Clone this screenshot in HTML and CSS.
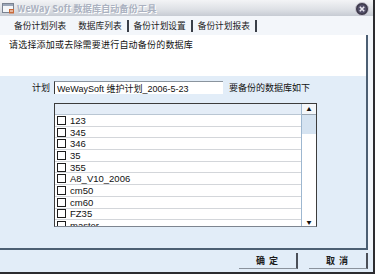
FILE: index.html
```html
<!DOCTYPE html>
<html lang="zh-CN">
  <head>
    <meta charset="UTF-8" />
    <meta name="viewport" content="width=device-width, initial-scale=1.0" />
    <title>WeWay Soft 数据库自动备份工具</title>
    <link rel="stylesheet" href="styles.css">
  </head>
  <body>
    <div class="window">
      <div class="titlebar">
        <svg class="app-icon" width="13" height="11" viewBox="0 0 13 11">
          <rect x="0.5" y="0.5" width="11" height="9" fill="#f4f6f8" stroke="#7a8290" />
          <rect x="1" y="1" width="10" height="2" fill="#9aa6b8" />
          <path d="M7 6 L12 6 L12 10.5 L7 10.5 Z" fill="#c86a3a" />
          <path d="M8 8 L11 8" stroke="#fff" stroke-width="1" />
        </svg>
        <span class="title">WeWay Soft 数据库自动备份工具</span>
        <svg class="close" width="14" height="14" viewBox="0 0 14 14">
          <circle cx="7" cy="7" r="6.5" fill="#3b3848" stroke="#c9c6d2" stroke-width="1" />
          <circle cx="7" cy="7" r="4.5" fill="#54506a" />
          <path d="M4.8 4.8 L9.2 9.2 M9.2 4.8 L4.8 9.2" stroke="#e8e6ee" stroke-width="1.6" />
        </svg>
      </div>

      <div class="tabs">
        <span class="tab first">备份计划列表</span>
        <span class="tab sep">数据库列表</span>
        <span class="tab sep">备份计划设置</span>
        <span class="tab sep">备份计划报表</span>
      </div>

      <div class="content">
        <div class="panel">
          <div class="desc">请选择添加或去除需要进行自动备份的数据库</div>
          <div class="form">
            <div class="plan-row">
              <label class="plan-label" for="plan">计划</label>
              <input class="plan-input" id="plan" type="text" value="WeWaySoft 维护计划_2006-5-23" />
              <span class="plan-note">要备份的数据库如下</span>
            </div>
            <div class="db-list">
              <div class="db-rows">
                <div class="db-head"></div>
                <div class="db-row"><span class="check"></span>123</div>
                <div class="db-row"><span class="check"></span>345</div>
                <div class="db-row"><span class="check"></span>346</div>
                <div class="db-row"><span class="check"></span>35</div>
                <div class="db-row"><span class="check"></span>355</div>
                <div class="db-row"><span class="check"></span>A8_V10_2006</div>
                <div class="db-row"><span class="check"></span>cm50</div>
                <div class="db-row"><span class="check"></span>cm60</div>
                <div class="db-row"><span class="check"></span>FZ35</div>
                <div class="db-row"><span class="check"></span>master</div>
              </div>
              <div class="scrollbar">
                <div class="arrow up">&#9650;</div>
                <div class="thumb"></div>
                <div class="track"></div>
                <div class="arrow down">&#9660;</div>
              </div>
            </div>
          </div>
        </div>
        <div class="buttons">
          <button class="btn">确 定</button>
          <button class="btn">取 消</button>
        </div>
      </div>
    </div>
  </body>
</html>
```

FILE: styles.css
```css
body {
  margin: 0;
  background-color: #e2edf8;
  font-family: "Noto Sans CJK SC", "Liberation Sans", sans-serif;
  font-size: 9px;
  color: #111;
}
.window {
  width: 375px;
  height: 274px;
  box-sizing: border-box;
  display: flex;
  flex-direction: column;
  background-color: #e2edf8;
  border-right: 2px solid #2c2c30;
  border-bottom: 2px solid #2c2c30;
  overflow: hidden;
}
.titlebar {
  height: 16px;
  flex: none;
  display: flex;
  align-items: center;
  padding: 0 4px 0 2px;
  background: linear-gradient(#f3f4f6, #dde0e5 60%, #c6cbd3);
}
.app-icon {
  margin-right: 2px;
}
.title {
  flex: 1;
  font-weight: bold;
  font-size: 9px;
  color: #aab1c0;
  text-shadow: 1px 1px 0 #fff;
  letter-spacing: 0.2px;
}
.close {
  margin-top: 1px;
}
.tabs {
  height: 19px;
  flex: none;
  display: flex;
  align-items: center;
  background-color: #f3f6fa;
  font-size: 8.7px;
}
.tab {
  padding: 0 5px;
  line-height: 12px;
  color: #1a1a1a;
}
.tab.first {
  padding-left: 14px;
  padding-right: 7px;
}
.tab.sep {
  border-right: 2px solid #3a3f48;
}
.content {
  flex: 1;
  display: flex;
  flex-direction: column;
  background-color: #f2f6fb;
}
.panel {
  margin-right: 5px;
  background-color: #e2edf8;
  border-right: 2px solid #4c5f73;
  border-bottom: 2px solid #4c5f73;
}
.desc {
  height: 41px;
  box-sizing: border-box;
  padding: 3px 9px;
  background-color: #fff;
  letter-spacing: 0.2px;
}
.form {
  padding: 5px 0 21px 0;
}
.plan-row {
  display: flex;
  align-items: center;
  height: 13px;
}
.plan-label {
  width: 50px;
  box-sizing: border-box;
  padding-left: 32px;
  margin-right: 4px;
}
.plan-input {
  width: 169px;
  height: 13px;
  box-sizing: border-box;
  margin: 0 6px 0 0;
  padding: 0 2px;
  border: none;
  border-left: 1px solid #3a3a3a;
  border-top: 1px solid #8a949e;
  background-color: #fff;
  font-family: "Liberation Sans", "Noto Sans CJK SC", sans-serif;
  font-size: 9px;
  color: #111;
}
.db-list {
  display: flex;
  margin: 9px 0 0 54px;
  width: 263px;
  height: 124px;
  box-sizing: border-box;
  border: 1px solid #3c3c3c;
  border-bottom-color: #7d8590;
  background-color: #fff;
  overflow: hidden;
}
.db-rows {
  flex: 1;
}
.db-head {
  height: 10px;
  background-color: #e4edf7;
  border-bottom: 1px solid #b9c6d3;
}
.db-row {
  height: 11.7px;
  box-sizing: border-box;
  display: flex;
  align-items: center;
  padding-left: 2px;
  border-bottom: 1px solid #d3d6da;
  font-family: "Liberation Sans", sans-serif;
  font-size: 9.5px;
}
.check {
  width: 9px;
  height: 9px;
  box-sizing: border-box;
  border: 1.5px solid #1c1c1c;
  margin-right: 4px;
  background-color: #fff;
}
.scrollbar {
  width: 14px;
  display: flex;
  flex-direction: column;
  border-left: 1px solid #9db7d0;
}
.arrow {
  height: 10px;
  font-size: 5px;
  line-height: 10px;
  text-align: center;
  color: #111;
}
.arrow.up {
  background-color: #f4f7fa;
  border-bottom: 1px solid #9aa6b2;
}
.thumb {
  height: 19px;
  background-color: #d5e3f1;
}
.track {
  flex: 1;
  background-color: #fff;
}
.arrow.down {
  height: 9px;
  line-height: 9px;
}
.buttons {
  display: flex;
  justify-content: flex-end;
  gap: 11px;
  padding: 3px 5px 0 0;
  background-color: #e2edf8;
  flex: 1;
}
.btn {
  width: 59px;
  height: 16px;
  padding: 0;
  border: none;
  border-right: 2px solid #4a4f58;
  border-bottom: 1px solid #8a929c;
  background-color: #e2edf8;
  font-family: "Noto Sans CJK SC", sans-serif;
  font-size: 9px;
  font-weight: bold;
  color: #1c1c1c;
  letter-spacing: 1px;
}
```
